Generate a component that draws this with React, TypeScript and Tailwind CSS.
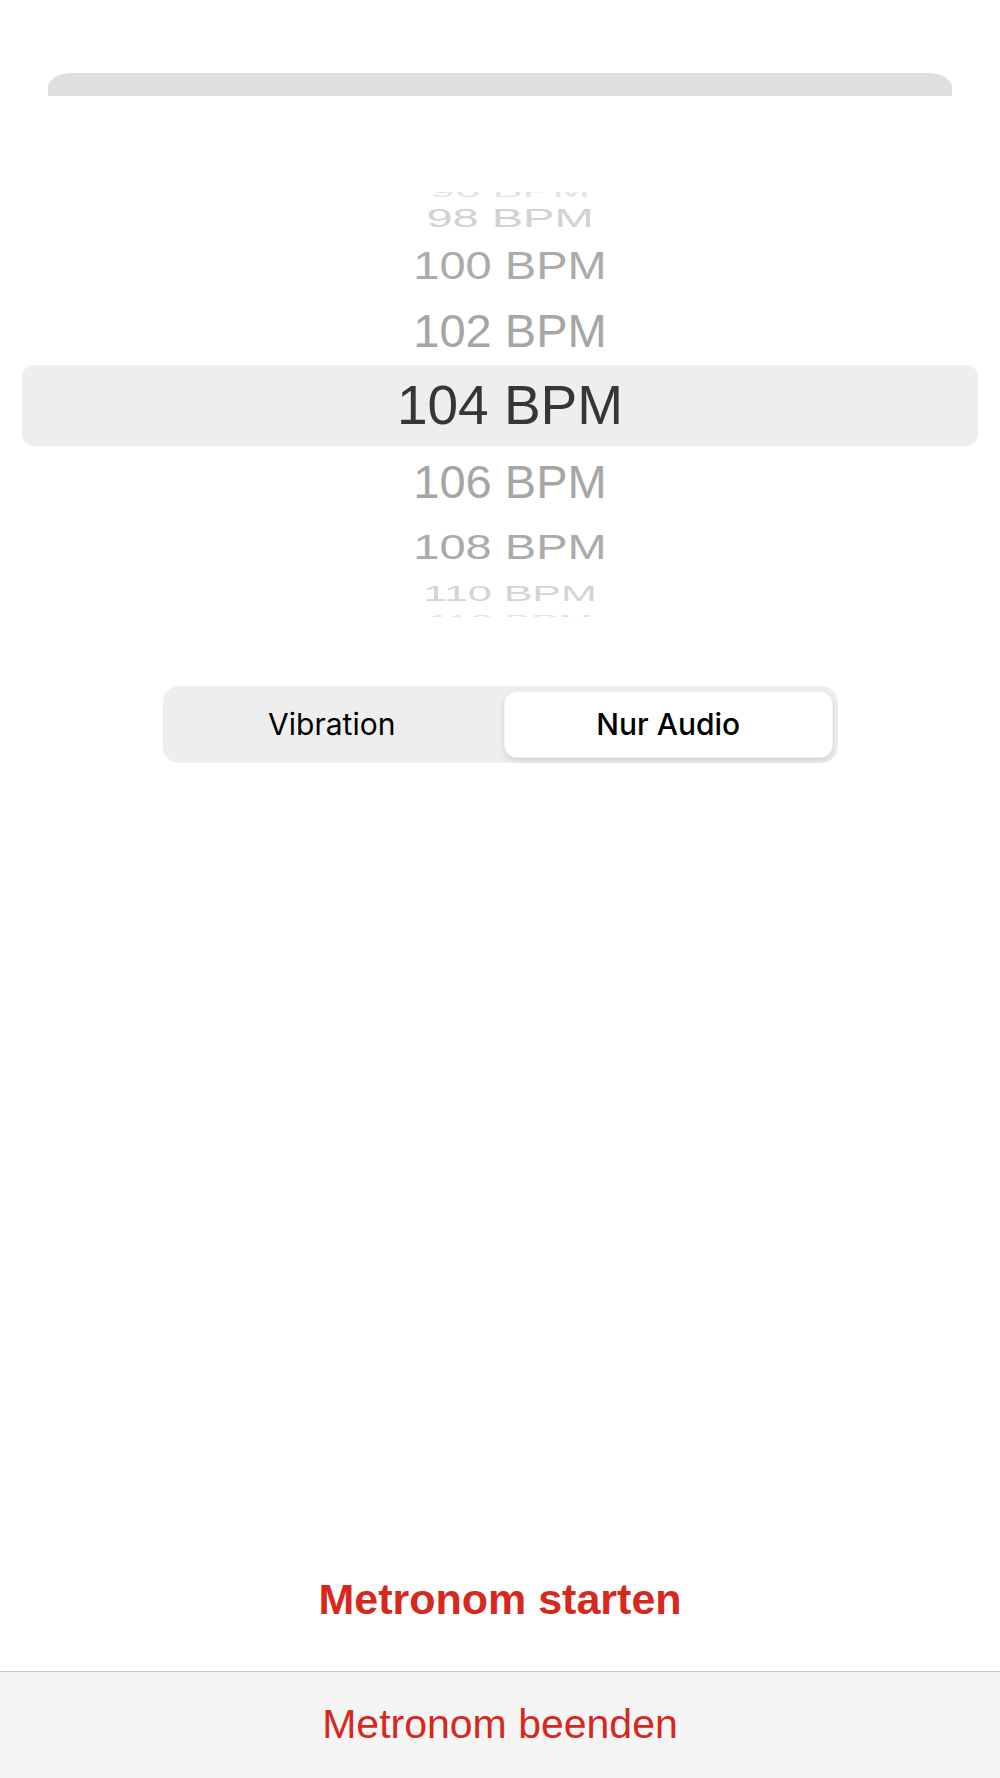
const rows = [
  { label: "96 BPM", h: "h-[20px]", size: "text-[45px]", scale: "scale-y-[0.35]", color: "text-[#e3e3e3]" },
  { label: "98 BPM", h: "h-[34px]", size: "text-[47px]", scale: "scale-y-[0.54]", color: "text-[#d2d2d2]" },
  { label: "100 BPM", h: "h-[60px]", size: "text-[47px]", scale: "scale-y-[0.83]", color: "text-[#ababab]" },
  { label: "102 BPM", h: "h-[70px]", size: "text-[47px]", scale: "scale-y-[0.98]", color: "text-[#a6a6a6]" },
  null,
  { label: "106 BPM", h: "h-[70px]", size: "text-[47px]", scale: "scale-y-[0.98]", color: "text-[#a6a6a6]" },
  { label: "108 BPM", h: "h-[60px]", size: "text-[47px]", scale: "scale-y-[0.75]", color: "text-[#ababab]" },
  { label: "110 BPM", h: "h-[34px]", size: "text-[43px]", scale: "scale-y-[0.5]", color: "text-[#d4d4d4]" },
  { label: "112 BPM", h: "h-[20px]", size: "text-[41px]", scale: "scale-y-[0.35]", color: "text-[#e3e3e3]" },
];

function Picker() {
  return (
    <div className="mt-[96px] h-[425px] overflow-hidden">
      <div className="-mt-[11px] flex flex-col">
        {rows.map((r, i) =>
          r ? (
            <div key={i} className={`${r.h} flex items-center justify-center pl-[20px]`}>
              <span className={`inline-block leading-none ${r.size} ${r.scale} ${r.color}`}>{r.label}</span>
            </div>
          ) : (
            <div
              key={i}
              className="h-[81px] mx-[22px] rounded-[12px] bg-[#eeeeee] flex items-center justify-center pl-[20px]"
            >
              <span className="leading-none text-[55px] text-[#363636]">104 BPM</span>
            </div>
          )
        )}
      </div>
    </div>
  );
}

export default function App() {
  return (
    <div className="h-[1778px] flex flex-col bg-white font-['Liberation_Sans',Arial,sans-serif]">
      <div className="mt-[73px] mx-[48px] h-[23px] bg-[#dfdfdf] rounded-tl-[25px_14px] rounded-tr-[25px_14px]" />

      <Picker />

      <div className="mt-[69px] mx-auto w-[675px] h-[77px] p-[5px] rounded-[16px] bg-[#eeeeee] grid grid-cols-2 font-['Inter',sans-serif] text-[30px] text-black">
        <div className="flex items-center justify-center pr-[4px]">Vibration</div>
        <div className="ml-[4px] flex items-center justify-center rounded-[13px] bg-white font-medium shadow-[0_2px_5px_rgba(0,0,0,0.14)] border border-black/5">
          Nur Audio
        </div>
      </div>

      <div className="flex-1" />

      <div className="h-[143px] flex items-center justify-center">
        <span className="text-[43px] font-bold text-[#d7281d]">Metronom starten</span>
      </div>
      <div className="h-[107px] border-t border-[#c8c8c8] bg-[#f5f5f5] flex items-center justify-center">
        <span className="text-[41px] text-[#d7281d]">Metronom beenden</span>
      </div>
    </div>
  );
}
